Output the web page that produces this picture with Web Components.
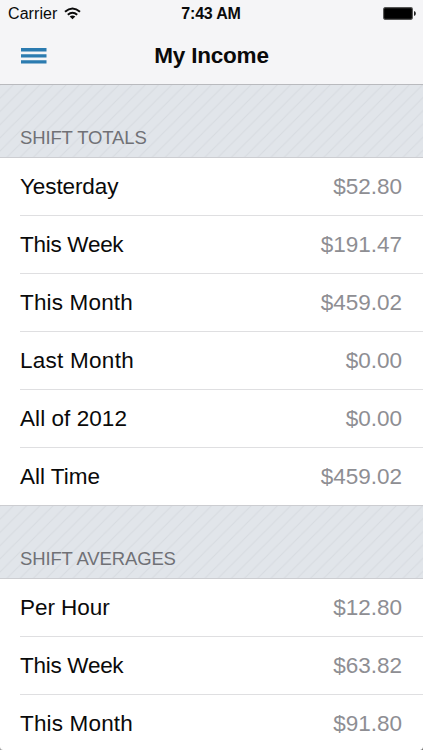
<!DOCTYPE html>
<html lang="en">
<head>
<meta charset="utf-8">
<meta name="viewport" content="width=device-width, initial-scale=1">
<title>My Income</title>
<style>
  body {
    margin: 0;
    height: 750px;
    overflow: hidden;
    background: #fff;
    font-family: "Liberation Sans", Arial, sans-serif;
    color: #0a0a0a;
  }
</style>
</head>
<body>
<income-app>
  <status-bar slot="top" carrier="Carrier" time="7:43 AM"></status-bar>
  <nav-bar slot="top">My Income</nav-bar>
  <income-section heading="SHIFT TOTALS">
    <income-row amount="$52.80" style="--spacing: -0.1px">Yesterday</income-row>
    <income-row amount="$191.47" style="--spacing: -0.28px">This Week</income-row>
    <income-row amount="$459.02" style="--spacing: 0.16px">This Month</income-row>
    <income-row amount="$0.00" style="--spacing: 0.26px">Last Month</income-row>
    <income-row amount="$0.00" style="--spacing: 0.06px">All of 2012</income-row>
    <income-row amount="$459.02">All Time</income-row>
  </income-section>
  <income-section heading="SHIFT AVERAGES">
    <income-row amount="$12.80" style="--spacing: -0.05px">Per Hour</income-row>
    <income-row amount="$63.82" style="--spacing: -0.28px">This Week</income-row>
    <income-row amount="$91.80" style="--spacing: 0.16px">This Month</income-row>
  </income-section>
</income-app>

<script>
  const define = (name, html, setup) => {
    const template = document.createElement("template");
    template.innerHTML = html;
    window.customElements.define(
      name,
      class extends HTMLElement {
        constructor() {
          super()
            .attachShadow({ mode: "open" })
            .appendChild(template.content.cloneNode(true));
        }

        connectedCallback() {
          if (setup) setup(this, this.shadowRoot);
        }
      }
    );
  };

  define("income-app", `
    <style>
      :host {
        display: block;
        position: relative;
        height: 750px;
        overflow: hidden;
      }
      .top {
        box-sizing: border-box;
        height: 85px;
        background: #f5f5f7;
        border-bottom: 1px solid #b9babe;
      }
      .corner {
        position: absolute;
        bottom: 0;
        width: 3px;
        height: 3px;
      }
      .left {
        left: 0;
        background: radial-gradient(circle at 100% 0, transparent 2.4px, #a0a0a0 3.4px);
      }
      .right {
        right: 0;
        background: radial-gradient(circle at 0 0, transparent 2.4px, #777 3.4px);
      }
    </style>
    <div class="top"><slot name="top"></slot></div>
    <slot></slot>
    <div class="corner left"></div>
    <div class="corner right"></div>
  `);

  define("status-bar", `
    <style>
      :host {
        display: grid;
        grid-template-columns: 1fr auto 1fr;
        align-items: center;
        height: 27px;
        padding: 0 7px 0 8px;
        font-size: 16px;
        line-height: 27px;
      }
      .carrier {
        display: flex;
        align-items: center;
        gap: 7px;
        letter-spacing: 0.08px;
      }
      .time {
        font-weight: bold;
        letter-spacing: -0.2px;
        margin-right: 2px;
      }
      .battery {
        justify-self: end;
      }
      svg {
        display: block;
      }
    </style>
    <div class="carrier">
      <span id="carrier"></span>
      <svg width="17" height="13" viewBox="0 0 17 13">
        <g fill="none" stroke="#0a0a0a" stroke-width="2">
          <path d="M1 4.8 Q8.5 -1.8 16 4.8"/>
          <path d="M3.8 7.7 Q8.5 3.7 13.2 7.7"/>
        </g>
        <path d="M5.7 9.5 Q8.5 7.4 11.3 9.5 L8.5 12.3 Z" fill="#0a0a0a"/>
      </svg>
    </div>
    <span class="time" id="time"></span>
    <svg class="battery" width="33" height="13" viewBox="0 0 33 13">
      <rect x=".6" y=".6" width="28.8" height="11.8" rx="1.6" fill="#000" stroke="#555" stroke-width="1.1"/>
      <path d="M31 4.3 h.6 q1.2 .5 1.2 2.2 t-1.2 2.2 h-.6z" fill="#222"/>
    </svg>
  `, (host, root) => {
    root.getElementById("carrier").textContent = host.getAttribute("carrier");
    root.getElementById("time").textContent = host.getAttribute("time");
  });

  define("nav-bar", `
    <style>
      :host {
        display: grid;
        grid-template-columns: 1fr auto 1fr;
        align-items: center;
        height: 57px;
        padding: 0 21px;
      }
      .title {
        font-size: 22.5px;
        font-weight: bold;
        line-height: 58px;
        letter-spacing: -0.2px;
      }
      svg {
        display: block;
      }
    </style>
    <svg width="26" height="16" viewBox="0 0 26 16">
      <path d="M0 0h25.5v3.4H0zM0 6.2h25.5v3.4H0zM0 12.2h25.5v3.4H0z" fill="#2b7bb0"/>
    </svg>
    <span class="title"><slot></slot></span>
  `);

  define("income-section", `
    <style>
      :host {
        display: block;
      }
      header {
        box-sizing: border-box;
        position: relative;
        display: flex;
        align-items: flex-end;
        height: 73px;
        padding: 0 20px 7px;
        border-bottom: 1px solid #cccdd1;
        background: #e1e5ea;
      }
      :host(:not(:first-of-type)) header {
        height: 74px;
        margin-top: -1px;
        border-top: 1px solid #cccdd1;
      }
      .stripes {
        position: absolute;
        inset: 0;
        width: 100%;
        height: 100%;
      }
      h2 {
        position: relative;
        margin: 0;
        font-size: 18.5px;
        font-weight: normal;
        line-height: 24px;
        letter-spacing: -0.13px;
        color: #707176;
      }
    </style>
    <header>
      <svg class="stripes">
        <defs>
          <pattern id="hatch" width="13.2" height="13.2" patternUnits="userSpaceOnUse">
            <path d="M-2 15.2L15.2 -2M-2 2L2 -2M11.2 15.2L15.2 11.2" stroke="#d7dbe0" stroke-width="1.1"/>
          </pattern>
        </defs>
        <rect width="100%" height="100%" fill="url(#hatch)"/>
      </svg>
      <h2></h2>
    </header>
    <slot></slot>
  `, (host, root) => {
    root.querySelector("h2").textContent = host.getAttribute("heading");
  });

  define("income-row", `
    <style>
      :host {
        display: flex;
        box-sizing: border-box;
        height: 58px;
        padding-left: 20px;
        background: #fff;
      }
      .cell {
        flex: 1;
        box-sizing: border-box;
        display: flex;
        justify-content: space-between;
        padding-right: 21px;
        border-bottom: 1px solid #dfdfe1;
        font-size: 22.5px;
        line-height: 58px;
        white-space: nowrap;
      }
      :host(:last-of-type) .cell {
        border-bottom: 0;
      }
      .label {
        letter-spacing: var(--spacing, 0);
      }
      .amount {
        color: #8e8e93;
      }
    </style>
    <div class="cell">
      <span class="label"><slot></slot></span>
      <span class="amount"></span>
    </div>
  `, (host, root) => {
    root.querySelector(".amount").textContent = host.getAttribute("amount");
  });
</script>
</body>
</html>
